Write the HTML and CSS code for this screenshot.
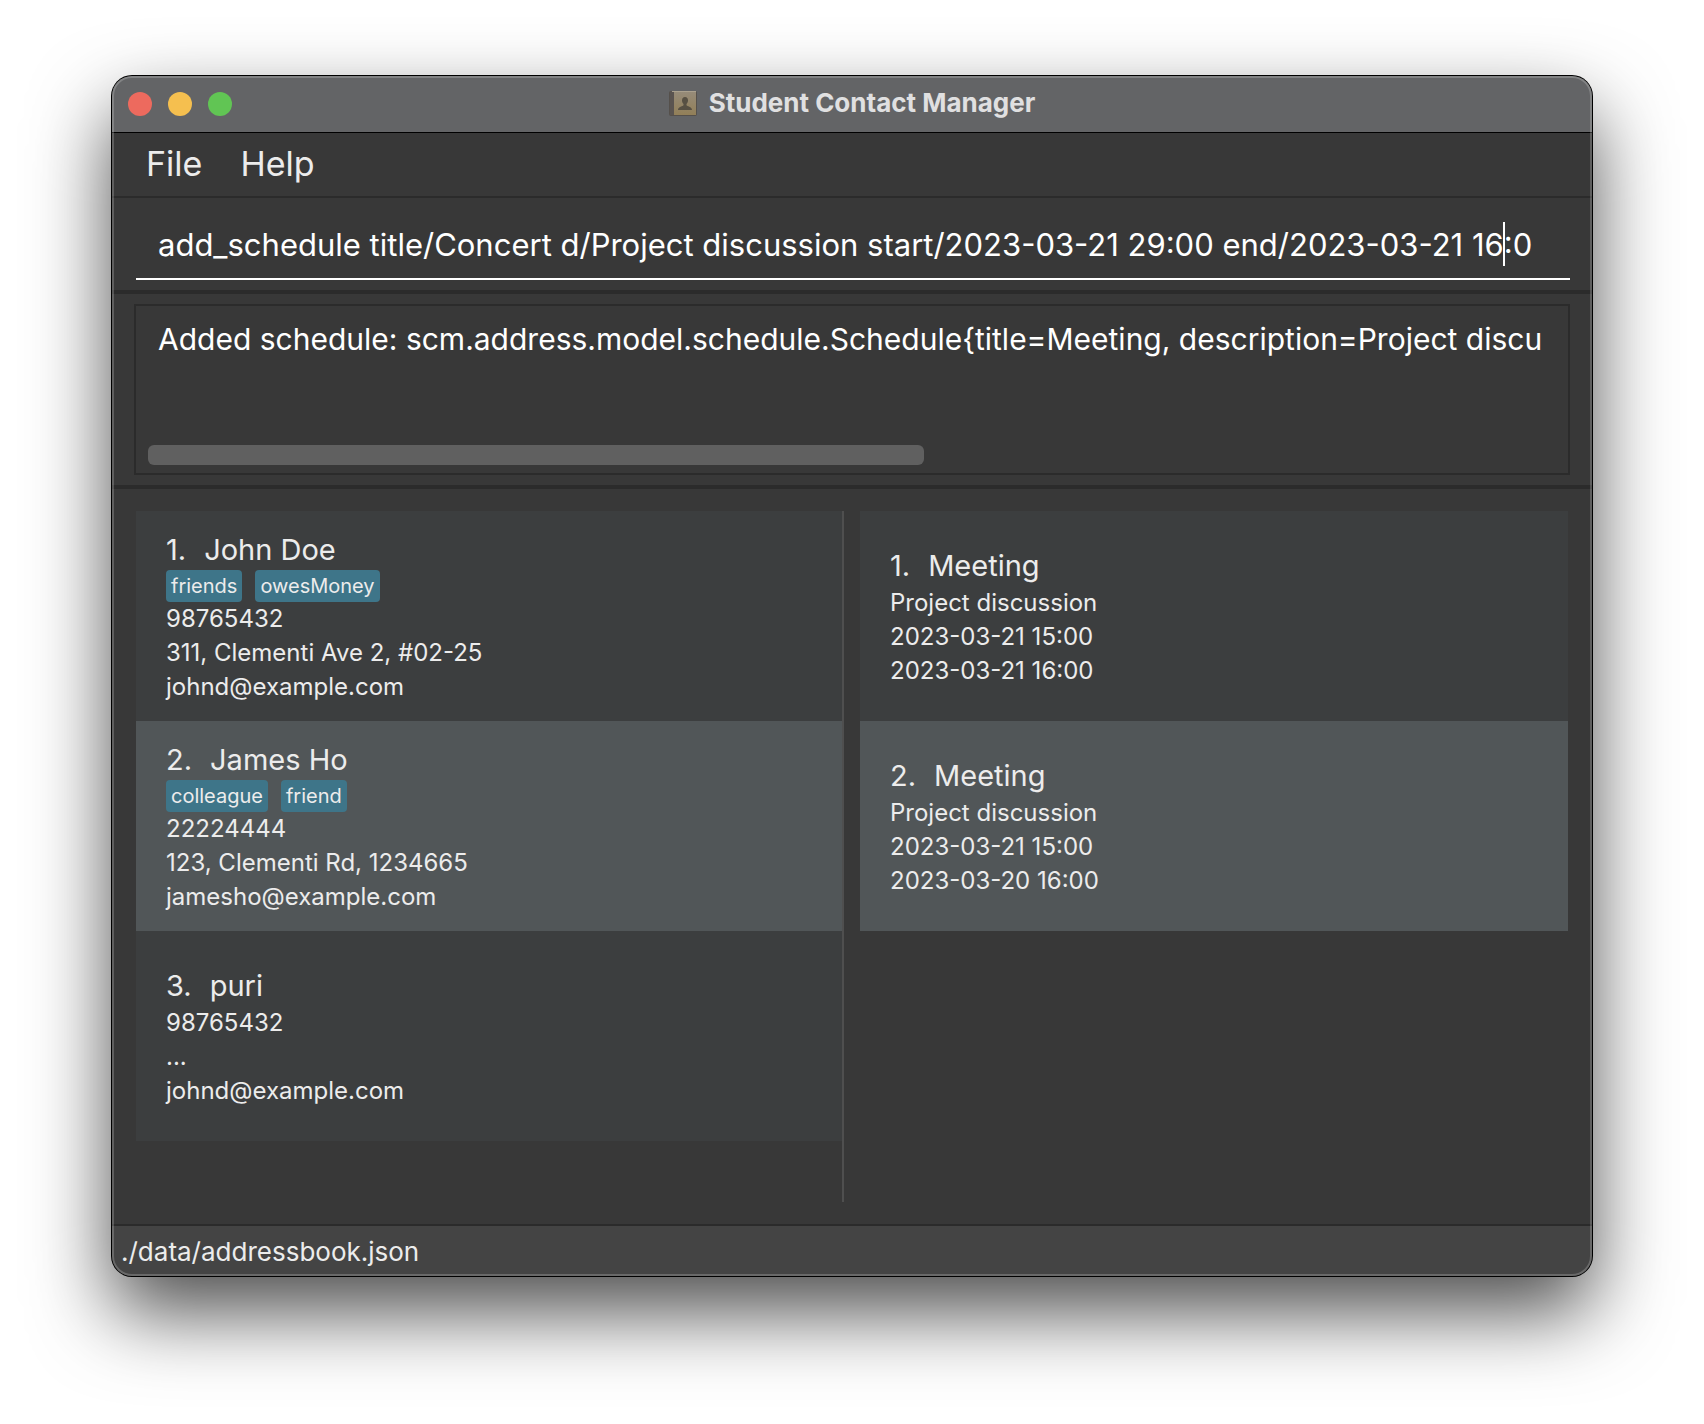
FILE: index.html
```html
<!DOCTYPE html>
<html lang="en">
<head>
<meta charset="utf-8">
<meta name="viewport" content="width=device-width, initial-scale=1">
<title>Student Contact Manager</title>
<link rel="stylesheet" href="styles.css">
</head>
<body>
<div class="window">
  <header class="titlebar">
    <div class="lights">
      <button class="light close" type="button" aria-label="Close"></button>
      <button class="light minimize" type="button" aria-label="Minimize"></button>
      <button class="light zoom" type="button" aria-label="Zoom"></button>
    </div>
    <h1 class="title">
      <svg class="app-icon" viewBox="0 0 28 26" aria-hidden="true">
        <defs>
          <linearGradient id="cover" x1="0" y1="0" x2="0" y2="1">
            <stop offset="0" stop-color="#968b7a"/>
            <stop offset="1" stop-color="#927f58"/>
          </linearGradient>
        </defs>
        <rect x="0" y="1" width="28" height="25" rx="2" fill="#55504b"/>
        <rect x="1" y="1" width="4" height="24" fill="#5a5450"/>
        <rect x="5" y="1" width="22" height="24" fill="url(#cover)"/>
        <rect x="3" y="1" width="24" height="1" fill="#aaa08d"/>
        <path d="M16 7c2 0 3 1.400 3 3.500 0 1.600-.7 2.700-1.500 3.400v1.400c.3 1 5.500 1.300 5.500 4.700H9c0-3.400 5.200-3.700 5.500-4.700v-1.400c-.8-.7-1.500-1.800-1.500-3.400C13 8.400 14 7 16 7z" fill="#575043"/>
      </svg>
      <span>Student Contact Manager</span>
    </h1>
  </header>

  <nav class="menubar">
    <button class="menu" type="button">File</button>
    <button class="menu" type="button">Help</button>
  </nav>

  <div class="command">
    <input class="command-input" type="text" aria-label="Command" spellcheck="false" value="add_schedule title/Concert d/Project discussion start/2023-03-21 29:00 end/2023-03-21 16:0">
    <span class="caret"></span>
  </div>

  <div class="result-area">
    <div class="result">
      <output class="result-text">Added schedule: scm.address.model.schedule.Schedule{title=Meeting, description=Project discu</output>
      <div class="scroll-thumb"></div>
    </div>
  </div>

  <main class="lists">
    <ol class="list persons">
      <li class="card">
        <h2 class="name"><span>1.</span><span>John Doe</span></h2>
        <div class="tags"><span class="tag">friends</span><span class="tag">owesMoney</span></div>
        <p class="line">98765432</p>
        <p class="line">311, Clementi Ave 2, #02-25</p>
        <p class="line">johnd@example.com</p>
      </li>
      <li class="card">
        <h2 class="name"><span>2.</span><span>James Ho</span></h2>
        <div class="tags"><span class="tag">colleague</span><span class="tag">friend</span></div>
        <p class="line">22224444</p>
        <p class="line">123, Clementi Rd, 1234665</p>
        <p class="line">jamesho@example.com</p>
      </li>
      <li class="card">
        <h2 class="name"><span>3.</span><span>puri</span></h2>
        <p class="line">98765432</p>
        <p class="line">...</p>
        <p class="line">johnd@example.com</p>
      </li>
    </ol>
    <ol class="list schedules">
      <li class="card">
        <h2 class="name"><span>1.</span><span>Meeting</span></h2>
        <p class="line">Project discussion</p>
        <p class="line">2023-03-21 15:00</p>
        <p class="line">2023-03-21 16:00</p>
      </li>
      <li class="card">
        <h2 class="name"><span>2.</span><span>Meeting</span></h2>
        <p class="line">Project discussion</p>
        <p class="line">2023-03-21 15:00</p>
        <p class="line">2023-03-20 16:00</p>
      </li>
    </ol>
  </main>

  <footer class="status">./data/addressbook.json</footer>
</div>
</body>
</html>
```
FILE: styles.css
```css
* {
  box-sizing: border-box;
}

body {
  margin: 0;
  min-height: 100vh;
  padding: 76px 112px 148px;
  display: flex;
  background: #fff;
  color: #ececec;
  font-family: Inter, "Liberation Sans", sans-serif;
  font-size: 24px;
}

h1, h2, p, ol {
  margin: 0;
  padding: 0;
  font-weight: 400;
}

ol {
  list-style: none;
}

button {
  padding: 0;
  border: 0;
  background: none;
  color: inherit;
  font: inherit;
}

.window {
  position: relative;
  flex: 1;
  min-width: 0;
  display: flex;
  flex-direction: column;
  overflow: hidden;
  border-radius: 20px;
  background: #383838;
  box-shadow: 0 0 0 1px #000, 0 36px 80px rgba(0, 0, 0, 0.7);
}

/* Light rim drawn over the window's edge */
.window::after {
  content: "";
  position: absolute;
  inset: 0;
  border: 2px solid rgba(255, 255, 255, 0.2);
  border-radius: 20px;
  pointer-events: none;
}

.titlebar {
  display: grid;
  grid-template-columns: 1fr auto 1fr;
  align-items: center;
  height: 57px;
  padding: 0 16px;
  border-bottom: 1px solid #000;
  background: #636466;
}

.lights {
  display: flex;
  gap: 16px;
}

.light {
  width: 24px;
  height: 24px;
  border-radius: 50%;
}

.close { background: #ed6a5e; }
.minimize { background: #f5bf4f; }
.zoom { background: #61c554; }

.title {
  display: flex;
  align-items: center;
  gap: 12px;
  padding-bottom: 2px;
  color: #e0e0e1;
  font-size: 26px;
  font-weight: 700;
  line-height: 32px;
}

.app-icon {
  width: 28px;
  height: 26px;
}

.menubar {
  display: flex;
  gap: 38px;
  height: 65px;
  padding: 0 34px 2px;
  border-bottom: 2px solid #2b2b2b;
  font-size: 34px;
}

.command {
  position: relative;
  padding: 12px 22px 10px 24px;
  border-bottom: 4px solid #2b2b2b;
}

.command-input {
  display: block;
  width: 100%;
  height: 70px;
  padding: 0 20px 0 22px;
  border: 0;
  border-bottom: 2px solid #fff;
  border-radius: 0;
  outline: 0;
  background: transparent;
  color: #fff;
  font: inherit;
  font-size: 31px;
}

.caret {
  position: absolute;
  top: 24px;
  left: 1391px;
  width: 2px;
  height: 44px;
  background: #fff;
}

.result-area {
  padding: 10px 22px;
  border-bottom: 4px solid #2b2b2b;
}

.result {
  display: flex;
  flex-direction: column;
  justify-content: space-between;
  height: 171px;
  padding: 12px 2px 8px 12px;
  border: 2px solid #2b2b2b;
}

.result-text {
  padding-left: 10px;
  overflow: hidden;
  color: #fff;
  font-size: 30px;
  line-height: 42px;
  white-space: nowrap;
}

.scroll-thumb {
  width: calc(55% - 4px);
  height: 20px;
  border-radius: 6px;
  background: #606060;
}

.lists {
  flex: 1;
  display: grid;
  grid-template-columns: 1fr 1fr;
  gap: 16px;
  padding: 22px 24px;
}

.persons {
  border-right: 2px solid #4f4f4f;
}

.card {
  display: flex;
  flex-direction: column;
  justify-content: center;
  height: 210px;
  padding: 0 30px;
  background: #3c3e3f;
}

.card:nth-child(even) {
  background: #515658;
}

.name {
  display: flex;
  gap: 18px;
  padding-top: 2px;
  font-size: 29px;
  line-height: 40px;
}

.tags {
  display: flex;
  gap: 13px;
}

.tag {
  padding: 0 5px;
  border-radius: 4px;
  background: #3e7589;
  font-size: 20px;
  line-height: 32px;
}

.line {
  line-height: 34px;
}

.status {
  height: 52px;
  padding: 0 9px;
  border-top: 2px solid #2b2b2b;
  background: #444;
  font-size: 26px;
  line-height: 52px;
}
```
